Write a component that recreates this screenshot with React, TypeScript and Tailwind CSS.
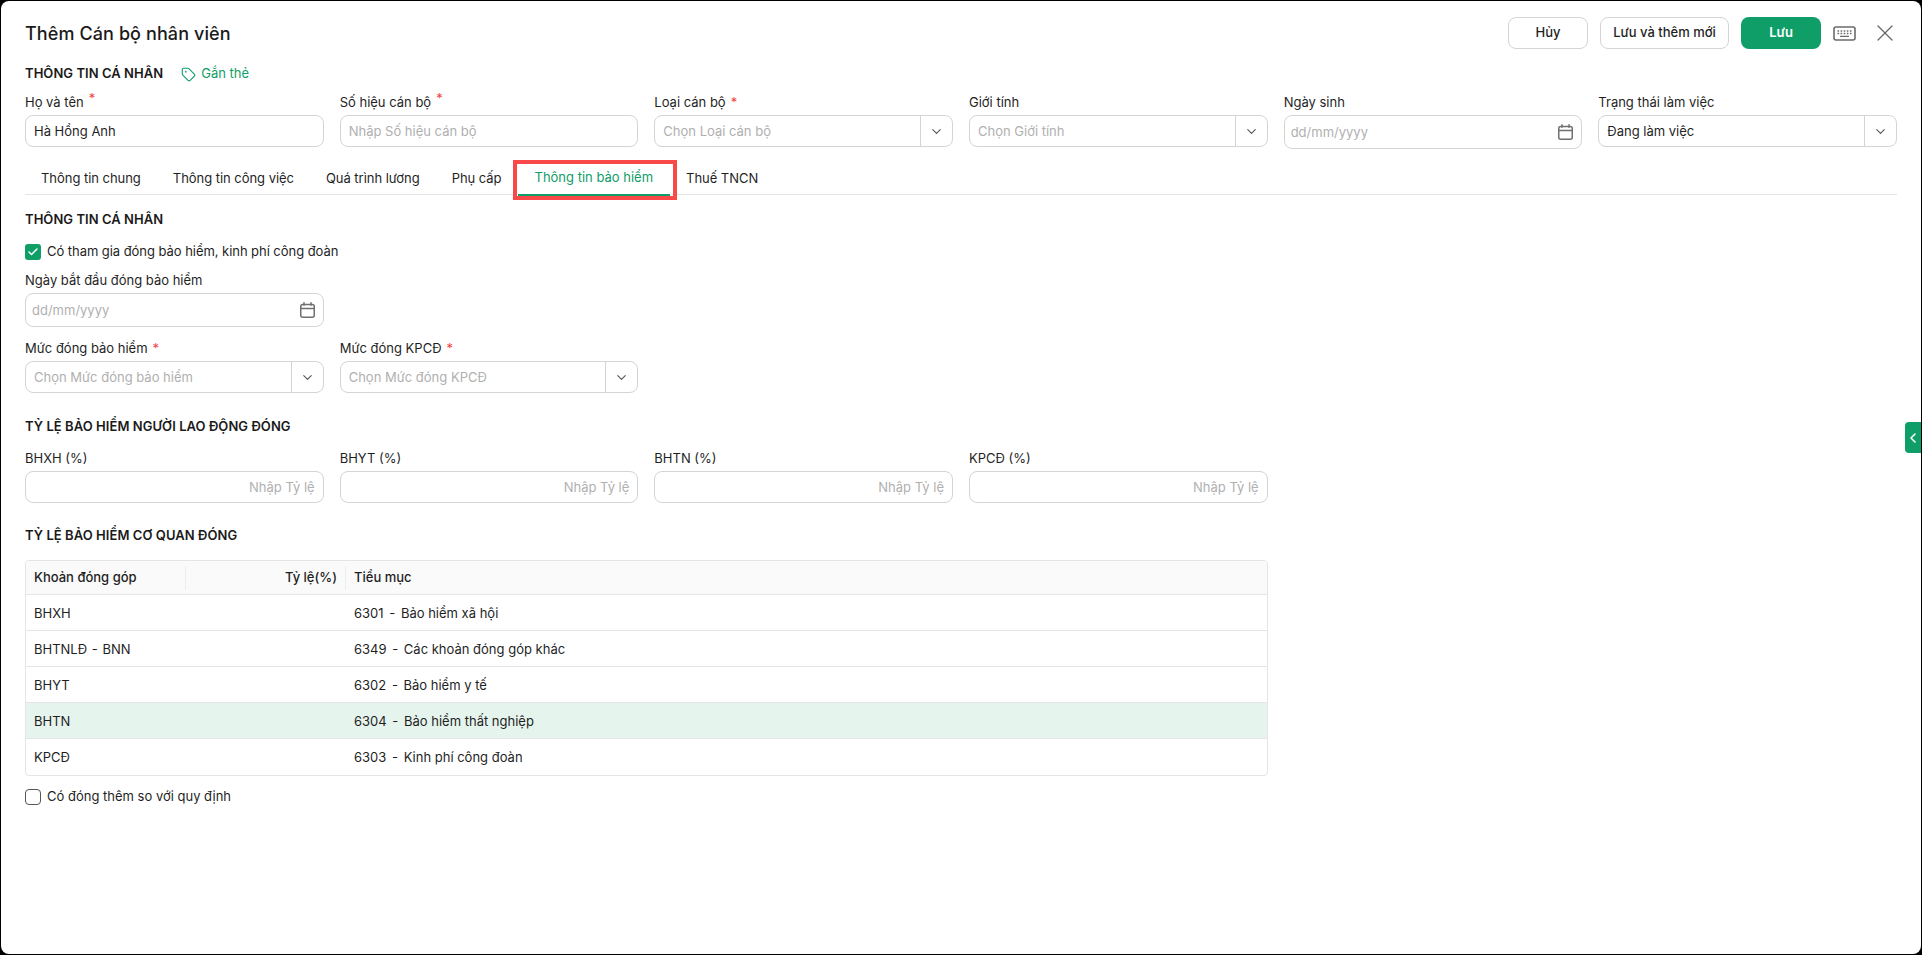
import { Check, ChevronDown, ChevronLeft, Tag, X } from "lucide-react";

const font = "font-['Inter','Noto_Sans',sans-serif]";

function Label({ text, required, raised }: { text: string; required?: boolean; raised?: boolean }) {
  return (
    <div className="mb-[3px] flex h-[18px] items-center text-[13px] text-[#1f1f1f]">
      {text}
      {required && <span className={`ml-[5px] text-[#f04444] ${raised ? "-mt-[8px]" : ""}`}>*</span>}
    </div>
  );
}

function TextInput({ label, required, raised, placeholder, value, right }: { label: string; required?: boolean; raised?: boolean; placeholder?: string; value?: string; right?: boolean }) {
  return (
    <div>
      <Label text={label} required={required} raised={raised} />
      <div className={`flex h-8 items-center rounded-lg border border-[#d4d4d4] px-[8px] pt-px text-[13px] ${right ? "justify-end" : ""} ${value ? "text-[#1f1f1f]" : "text-[#b0b0b0]"}`}>
        {value ?? placeholder}
      </div>
    </div>
  );
}

function SelectInput({ label, required, placeholder, value }: { label: string; required?: boolean; placeholder?: string; value?: string }) {
  return (
    <div>
      <Label text={label} required={required} />
      <div className="flex h-8 items-center rounded-lg border border-[#d4d4d4] text-[13px]">
        <span className={`flex-1 px-[8px] pt-px ${value ? "text-[#1f1f1f]" : "text-[#b0b0b0]"}`}>{value ?? placeholder}</span>
        <span className="flex h-full w-8 items-center justify-center border-l border-[#d4d4d4] text-[#555]">
          <ChevronDown size={15} strokeWidth={1.75} />
        </span>
      </div>
    </div>
  );
}

function CalendarIcon() {
  return (
    <svg width="15" height="16" viewBox="0 0 15 16" fill="none" stroke="#707070" strokeWidth="1.5" strokeLinecap="round">
      <rect x="0.75" y="2.5" width="13.5" height="12.75" rx="2" />
      <path d="M0.75 6.5h13.5M4 0.75v2.5M11 0.75v2.5" />
    </svg>
  );
}

function DateInput({ label }: { label: string }) {
  return (
    <div>
      <Label text={label} />
      <div className="flex h-[34px] items-center justify-between rounded-lg border border-[#d4d4d4] pl-[6px] pr-[8px] text-[13px] text-[#b0b0b0]">
        <span className="pt-[2px]">dd/mm/yyyy</span>
        <CalendarIcon />
      </div>
    </div>
  );
}

function KeyboardIcon() {
  return (
    <svg width="23" height="15" viewBox="0 0 23 15" fill="none" className="text-[#6b6b6b]">
      <rect x="1" y="1" width="21" height="13" rx="2" stroke="currentColor" strokeWidth="1.6" />
      <path d="M4.5 5h1.6M7.6 5h1.6M10.7 5h1.6M13.8 5h1.6M16.9 5h1.6M4.5 7.5h1.6M7.6 7.5h1.6M10.7 7.5h1.6M13.8 7.5h1.6M16.9 7.5h1.6M7 10.4h9" stroke="currentColor" strokeWidth="1.4" />
    </svg>
  );
}

function Dashed({ text, tight }: { text: string; tight?: boolean }) {
  const parts = text.split(" - ");
  if (parts.length < 2) return <>{text}</>;
  return (
    <>
      {parts[0]} <span className={tight ? "mx-px" : "mx-[2px]"}>-</span> {parts[1]}
    </>
  );
}

const tabs = ["Thông tin chung", "Thông tin công việc", "Quá trình lương", "Phụ cấp", "Thông tin bảo hiểm", "Thuế TNCN"];

const rows = [
  ["BHXH", "6301 - Bảo hiểm xã hội"],
  ["BHTNLĐ - BNN", "6349 - Các khoản đóng góp khác"],
  ["BHYT", "6302 - Bảo hiểm y tế"],
  ["BHTN", "6304 - Bảo hiểm thất nghiệp"],
  ["KPCĐ", "6303 - Kinh phí công đoàn"],
];

function SectionTitle({ children }: { children: string }) {
  return <div className="flex h-5 items-center text-[13px] font-semibold tracking-[0.05px] text-[#1a1a1a]">{children}</div>;
}

export default function App() {
  return (
    <div className={`h-[955px] w-[1922px] overflow-hidden bg-black p-px ${font}`}>
      <div className="relative h-full rounded-[8px] bg-white px-6 pt-4 text-[#1f1f1f]">
        <div className="flex h-8 items-center">
          <h1 className="flex-1 text-[18px] font-medium tracking-[0.1px] text-[#1a1a1a]">Thêm Cán bộ nhân viên</h1>
          <button className="h-8 w-20 rounded-lg border border-[#d4d4d4] text-[13px] font-medium">Hủy</button>
          <button className="ml-3 h-8 w-[129px] rounded-lg border border-[#d4d4d4] text-[13px] font-medium">Lưu và thêm mới</button>
          <button className="ml-3 h-8 w-20 rounded-lg bg-[#0f9d68] text-[13px] font-semibold text-white">Lưu</button>
          <span className="ml-3 flex"><KeyboardIcon /></span>
          <X size={28} strokeWidth={1.1} className="-mr-[2px] ml-[15px] text-[#666]" />
        </div>

        <div className="mt-[15px] flex items-center">
          <SectionTitle>THÔNG TIN CÁ NHÂN</SectionTitle>
          <span className="ml-[18px] flex items-center gap-[5px] text-[13px] text-[#0f9d68]">
            <Tag size={15} strokeWidth={1.75} />
            Gắn thẻ
          </span>
        </div>

        <div className="mt-[10px] grid grid-cols-6 items-start gap-x-4">
          <TextInput label="Họ và tên" required raised value="Hà Hồng Anh" />
          <TextInput label="Số hiệu cán bộ" required raised placeholder="Nhập Số hiệu cán bộ" />
          <SelectInput label="Loại cán bộ" required placeholder="Chọn Loại cán bộ" />
          <SelectInput label="Giới tính" placeholder="Chọn Giới tính" />
          <DateInput label="Ngày sinh" />
          <SelectInput label="Trạng thái làm việc" value="Đang làm việc" />
        </div>

        <div className="mt-[13px] flex h-[33px] border-b border-[#e5e5e5] text-[13px] tracking-[-0.04px]">
          {tabs.map((t, i) =>
            i === 4 ? (
              <div key={t} className="relative flex h-[34px] shrink-0 items-center border-b-2 border-[#0f9d68] px-[17px] tracking-normal text-[#0f9d68]">
                {t}
                <span className="absolute -bottom-[6px] -left-[5px] -right-[7px] -top-[2px] border-4 border-[#f84848]" />
              </div>
            ) : (
              <div key={t} className="flex h-[33px] shrink-0 items-center px-4 pt-px">{t}</div>
            )
          )}
        </div>

        <div className="mt-[15px]"><SectionTitle>THÔNG TIN CÁ NHÂN</SectionTitle></div>

        <div className="mt-[14px] flex h-4 items-center gap-[6px] text-[13px] tracking-[-0.05px]">
          <span className="flex h-4 w-4 items-center justify-center rounded-[3px] bg-[#0f9d68] text-white">
            <Check size={12} strokeWidth={3} />
          </span>
          Có tham gia đóng bảo hiểm, kinh phí công đoàn
        </div>

        <div className="mt-[12px] grid grid-cols-6 gap-x-4">
          <DateInput label="Ngày bắt đầu đóng bảo hiểm" />
        </div>

        <div className="mt-[13px] grid grid-cols-6 gap-x-4">
          <SelectInput label="Mức đóng bảo hiểm" required placeholder="Chọn Mức đóng bảo hiểm" />
          <SelectInput label="Mức đóng KPCĐ" required placeholder="Chọn Mức đóng KPCĐ" />
        </div>

        <div className="mt-[24px]"><SectionTitle>TỶ LỆ BẢO HIỂM NGƯỜI LAO ĐỘNG ĐÓNG</SectionTitle></div>

        <div className="mt-[13px] grid grid-cols-6 gap-x-4">
          <TextInput label="BHXH (%)" placeholder="Nhập Tỷ lệ" right />
          <TextInput label="BHYT (%)" placeholder="Nhập Tỷ lệ" right />
          <TextInput label="BHTN (%)" placeholder="Nhập Tỷ lệ" right />
          <TextInput label="KPCĐ (%)" placeholder="Nhập Tỷ lệ" right />
        </div>

        <div className="mt-[23px]"><SectionTitle>TỶ LỆ BẢO HIỂM CƠ QUAN ĐÓNG</SectionTitle></div>

        <div className="mt-[14px] w-[1243px] overflow-hidden rounded-[4px] border border-[#e5e5e5] text-[13px]">
          <div className="flex h-[34px] items-center border-b border-[#e5e5e5] bg-[#fafafa] pt-px font-medium">
            <div className="flex h-[24px] w-[160px] items-center border-r border-[#ececec] pl-[8px]">Khoản đóng góp</div>
            <div className="flex h-[24px] w-[160px] items-center justify-end border-r border-[#ececec] pr-[8px]">Tỷ lệ(%)</div>
            <div className="pl-[8px]">Tiểu mục</div>
          </div>
          {rows.map(([a, b], i) => (
            <div key={a} className={`flex h-[36px] items-center pt-[2px] ${i < rows.length - 1 ? "border-b border-[#e5e5e5]" : ""} ${a === "BHTN" ? "bg-[#e6f4ee]" : ""}`}>
              <div className="w-[320px] pl-[8px]"><Dashed text={a} tight /></div>
              <div className="pl-[8px]"><Dashed text={b} /></div>
            </div>
          ))}
        </div>

        <div className="mt-[13px] flex h-4 items-center gap-[6px] text-[13px]">
          <span className="h-4 w-4 rounded-[4px] border border-[#555]" />
          Có đóng thêm so với quy định
        </div>

        <div className="absolute right-0 top-[421px] flex h-[31px] w-4 items-center justify-center rounded-l-[4px] bg-[#0f9d68] text-white">
          <ChevronLeft size={20} strokeWidth={2.4} />
        </div>
      </div>
    </div>
  );
}
